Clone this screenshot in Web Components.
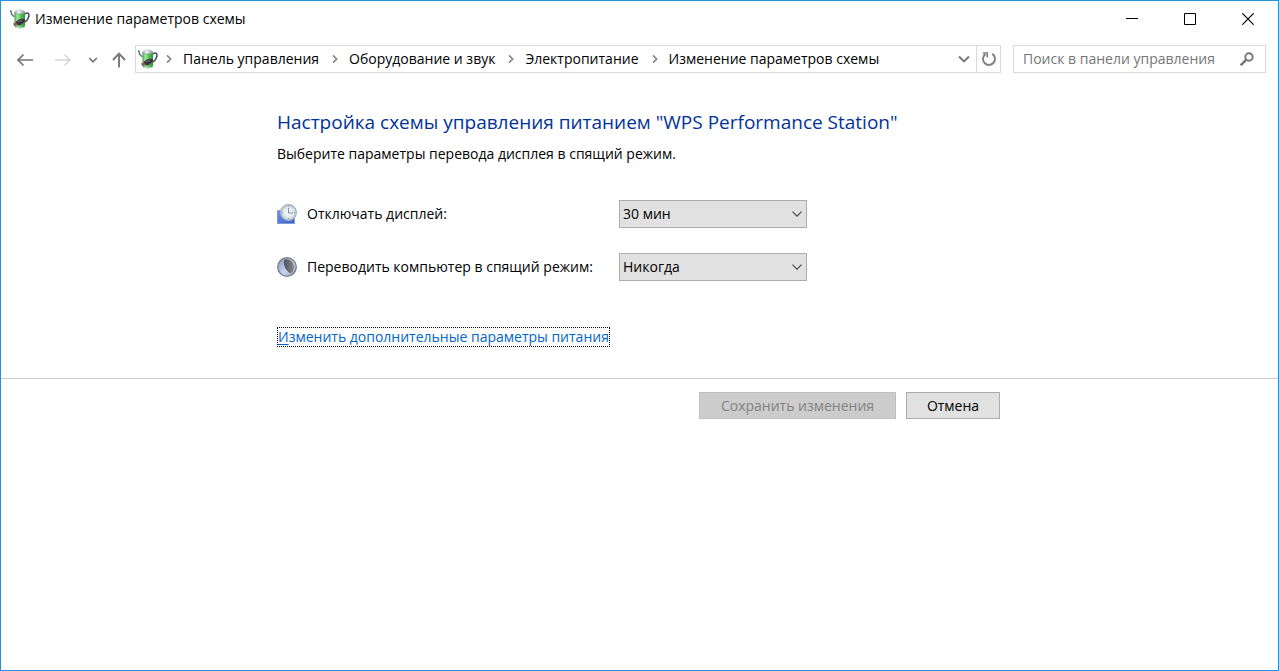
<!DOCTYPE html>
<html lang="ru">
<head>
<meta charset="utf-8">
<meta name="viewport" content="width=device-width, initial-scale=1">
<title>Изменение параметров схемы</title>
<style>
  html, body { height: 100%; margin: 0; }
  body {
    background: #fff;
    color: #000;
    font: 14px/20px "Open Sans", "Noto Sans", sans-serif;
  }
</style>
</head>
<body>
<power-window>
  <title-bar slot="title">Изменение параметров схемы</title-bar>
  <nav-bar slot="nav">
    <crumb-item>Панель управления</crumb-item>
    <crumb-item>Оборудование и звук</crumb-item>
    <crumb-item>Электропитание</crumb-item>
    <crumb-item>Изменение параметров схемы</crumb-item>
  </nav-bar>
  <plan-settings>
    <span slot="heading">Настройка схемы управления питанием "WPS Performance Station"</span>
    <span slot="hint">Выберите параметры перевода дисплея в спящий режим.</span>
    <setting-row label="Отключать дисплей:" icon="display" options="30 мин|1 час|Никогда"></setting-row>
    <setting-row label="Переводить компьютер в спящий режим:" icon="sleep" options="Никогда|30 мин|1 час"></setting-row>
    <advanced-link slot="link"></advanced-link>
  </plan-settings>
  <action-bar></action-bar>
</power-window>

<script>
const define = (name, html, setup) => {
  const template = document.createElement('template');
  template.innerHTML = `<style>*{box-sizing:border-box}</style>` + html;
  customElements.define(name, class extends HTMLElement {
    constructor() {
      super();
      this.attachShadow({ mode: 'open' }).append(template.content.cloneNode(true));
    }
    connectedCallback() {
      if (setup) setup(this, this.shadowRoot);
    }
  });
};

/* Green battery with a power plug, used by the title bar and the address box */
define('battery-icon', `
<style>:host{display:block;width:20px;height:20px;flex:none}svg{display:block}</style>
<svg width="20" height="20" viewBox="0 0 20 20" aria-hidden="true">
  <defs>
    <linearGradient id="g" x1="0" x2="1">
      <stop offset="0" stop-color="#3f9c45"/><stop offset=".25" stop-color="#a2e89a"/>
      <stop offset=".6" stop-color="#52c45a"/><stop offset="1" stop-color="#2f953c"/>
    </linearGradient>
    <linearGradient id="c" x1="0" x2="1">
      <stop offset="0" stop-color="#9aa19f"/><stop offset=".4" stop-color="#f4f6f7"/><stop offset="1" stop-color="#87918f"/>
    </linearGradient>
  </defs>
  <path d="M15 5c2.600-2 4.300-.8 3.900 2-.4 3-1.500 4.500-4.300 6.200" fill="none" stroke="#4b4a63" stroke-width="1.500"/>
  <path d="M.6 1c.3 3 1 5.600 4 6.600" fill="none" stroke="#6d7085" stroke-width="1.500"/>
  <path d="M4.500 3.500v13.500c0 2.300 10.500 2.300 10.500 0v-13.500z" fill="url(#g)"/>
  <path d="M4.500 3.500c0-1.400 1.800-1.700 3-1.900.4-1.300 4-1.300 4.400 0 1.600.2 3.100.5 3.100 1.900 0 1.700-10.500 1.700-10.500 0z" fill="url(#c)" stroke="#8c9995" stroke-width=".4"/>
  <path d="M4.500 16.800c0 2.400 10.500 2.400 10.500 0v1c0 2.200-10.500 2.200-10.500 0z" fill="#b4c4ba"/>
  <path d="M3 14.700l3.500-2.200 2 2.900-3.400 1.800z" fill="#5d4a39"/>
  <path d="M3.300 15.100l2.600-1.500M4.300 16.500l2.700-1.400" stroke="#c79a58" stroke-width=".8"/>
  <path d="M6 12.600l3.500-2.400c1.500-.6 3.500-.4 5.500-.2l-.3 2.700-3.400 3.100-3.400.8z" fill="#3a3540"/>
  <path d="M8.500 12.500l3.300-1.300" stroke="#8a8792" stroke-width=".8"/>
</svg>`);

/* Thin glyphs of the window frame and toolbar */
const glyphs = {
  minimize: ['12', '<path d="M0 5.500h12" stroke="#000" fill="none"/>'],
  maximize: ['12', '<path d="M.5.500h11v11h-11z" stroke="#000" fill="none"/>'],
  close: ['12', '<path d="M.3.300l11.400 11.400M11.700.300l-11.400 11.400" stroke="#000" stroke-width="1.200" fill="none"/>'],
  back: ['16', '<path d="M1 8h15M6.500 2.500l-5.500 5.500 5.500 5.500" stroke="#767676" stroke-width="1.700" fill="none"/>'],
  forward: ['16', '<path d="M0 8h15M9.500 2.500l5.500 5.500-5.500 5.500" stroke="#d5d5d5" stroke-width="1.500" fill="none"/>'],
  recent: ['10', '<path d="M1.200 3l3.800 3.800 3.800-3.800" stroke="#767676" stroke-width="1.700" fill="none"/>'],
  up: ['16', '<path d="M8 1.500v14M2 8l6-6.300 6 6.300" stroke="#767676" stroke-width="1.900" fill="none"/>'],
  next: ['8', '<path d="M2 .4l3.700 3.600-3.700 3.600" stroke="#808080" stroke-width="1.600" fill="none"/>'],
  drop: ['12', '<path d="M1 3.500l5 5 5-5" stroke="#767676" stroke-width="1.900" fill="none"/>'],
  refresh: ['16', '<path d="M11.300 2.900a6 6 0 1 1-6.900.2" stroke="#808080" stroke-width="2" fill="none"/><path d="M1.700 2h4.600v4.600" stroke="#808080" stroke-width="1.600" fill="none"/>'],
  search: ['14', '<circle cx="9" cy="5" r="3.700" stroke="#767676" stroke-width="1.900" fill="none"/><path d="M6.300 7.700l-5.600 5.600" stroke="#767676" stroke-width="2.400" fill="none"/>'],
  select: ['10', '<path d="M.5 2.700l4.500 4.500 4.500-4.500" stroke="#444" stroke-width="1.100" fill="none"/>'],
};
define('line-glyph', `
<style>:host{display:block;flex:none}svg{display:block}</style><span></span>`, (el, root) => {
  const [size, body] = glyphs[el.getAttribute('name')];
  root.querySelector('span').innerHTML =
    `<svg width="${size}" height="${size}" viewBox="0 0 ${size} ${size}" aria-hidden="true">${body}</svg>`;
});

define('power-window', `
<style>
  :host{display:flex;flex-direction:column;box-sizing:border-box;min-height:100%;border:1px solid #2292d9;background:#fff}
</style>
<slot name="title"></slot>
<slot name="nav"></slot>
<main><slot></slot></main>`);

define('title-bar', `
<style>
  :host{display:flex;align-items:center;height:36px;padding:0 1px 0 9px}
  h1{flex:1;margin:0 0 0 5px;font:inherit;line-height:22px}
  button{display:grid;place-items:center;width:58px;height:36px;padding:0;border:0;background:none}
</style>
<battery-icon></battery-icon>
<h1><slot></slot></h1>
<button aria-label="Свернуть"><line-glyph name="minimize"></line-glyph></button>
<button aria-label="Развернуть"><line-glyph name="maximize"></line-glyph></button>
<button aria-label="Закрыть"><line-glyph name="close"></line-glyph></button>`);

define('crumb-item', `
<style>
  :host{display:flex;align-items:center;gap:10px;white-space:nowrap}
  a{color:inherit;text-decoration:none}
</style>
<line-glyph name="next"></line-glyph><a href="#"><slot></slot></a>`);

define('nav-bar', `
<style>
  :host{display:flex;align-items:center;margin:7px 12px 0 5px}
  button{display:grid;place-items:center;padding:0;border:0;background:none;height:28px}
  .history{display:grid;grid-template-columns:38px 38px 22px 30px;margin-right:1px;padding-top:2px}
  .address{flex:1;display:flex;align-items:center;height:28px;padding-left:2px;border:1px solid #d9d9d9;min-width:0}
  nav{flex:1;display:flex;gap:12px;margin-left:7px;min-width:0;overflow:hidden}
  .drop{width:24px}
  .refresh{width:24px;height:26px;border-left:1px solid #d9d9d9}
  .search{display:flex;align-items:center;width:253px;height:28px;margin-left:12px;padding:0 11px 0 9px;border:1px solid #d9d9d9}
  input{flex:1;min-width:0;padding:0;border:0;outline:0;font:inherit;background:none}
  input::placeholder{color:#767676;opacity:1}
</style>
<div class="history">
  <button aria-label="Назад"><line-glyph name="back"></line-glyph></button>
  <button aria-label="Вперед"><line-glyph name="forward"></line-glyph></button>
  <button aria-label="Последние расположения"><line-glyph name="recent"></line-glyph></button>
  <button aria-label="Вверх"><line-glyph name="up"></line-glyph></button>
</div>
<div class="address">
  <battery-icon></battery-icon>
  <nav aria-label="Путь"><slot></slot></nav>
  <button class="drop" aria-label="Предыдущие расположения"><line-glyph name="drop"></line-glyph></button>
  <button class="refresh" aria-label="Обновить"><line-glyph name="refresh"></line-glyph></button>
</div>
<div class="search">
  <input type="text" placeholder="Поиск в панели управления" aria-label="Поиск в панели управления">
  <line-glyph name="search"></line-glyph>
</div>`);

define('plan-settings', `
<style>
  :host{display:block;max-width:725px;margin:0 auto;padding:34px 0 31px}
  h2{margin:0;font-size:19px;line-height:28px;font-weight:400;color:#003399}
  p{margin:8px 0 36px}
  .rows{display:grid;gap:25px;margin-bottom:46px}
</style>
<h2><slot name="heading"></slot></h2>
<p><slot name="hint"></slot></p>
<div class="rows"><slot></slot></div>
<slot name="link"></slot>`);

const settingIcons = {
  display: `
    <defs>
      <linearGradient id="s" x2="1" y2="1"><stop offset="0" stop-color="#6f8fe6"/><stop offset="1" stop-color="#3a62cc"/></linearGradient>
      <radialGradient id="f"><stop offset="0" stop-color="#fff"/><stop offset=".7" stop-color="#d9e6ec"/><stop offset="1" stop-color="#a8bdc9"/></radialGradient>
    </defs>
    <path d="M.5 6.500h17v13h-17z" fill="url(#s)" stroke="#7891cd" stroke-width=".8"/>
    <circle cx="11.500" cy="8.500" r="7.900" fill="url(#f)" stroke="#a9b4b8" stroke-width="1.200"/>
    <path d="M11.500 4v5h4.500" fill="none" stroke="#83919b" stroke-width="1.100"/>
    <path d="M11.500 2v1M11.500 14v1M5 8.500h1M17 8.500h1" stroke="#93a4ae"/>`,
  sleep: `
    <defs>
      <linearGradient id="m" x2="1" y2="1"><stop offset="0" stop-color="#7f90ba"/><stop offset=".55" stop-color="#c8d5f1"/><stop offset="1" stop-color="#8b9ac0"/></linearGradient>
      <linearGradient id="d" x2="1"><stop offset="0" stop-color="#50555c"/><stop offset="1" stop-color="#868784"/></linearGradient>
    </defs>
    <circle cx="10" cy="10" r="9.300" fill="url(#m)" stroke="#7c7c82" stroke-width="1.300"/>
    <path d="M7.200 2.700c4-1.600 9.600 1.200 9.700 7 .1 3.200-1.300 5.600-3.200 6.500-4.400-1.500-8-8-6.500-13.500z" fill="url(#d)"/>`,
};

define('setting-row', `
<style>
  :host{display:grid;grid-template-columns:20px 302px 188px;column-gap:10px;align-items:center}
  svg{display:block}
  label{white-space:nowrap}
  .box{display:grid;align-items:center}
  .box > *{grid-area:1/1}
  select{appearance:none;width:100%;height:28px;margin:0;padding:0 24px 0 3px;border:1px solid #adadad;border-radius:0;background:#e1e1e1;color:#000;font:inherit}
  line-glyph{justify-self:end;margin-right:5px;pointer-events:none}
</style>
<svg width="20" height="20" viewBox="0 0 20 20" aria-hidden="true"></svg>
<label for="value"></label>
<div class="box"><select id="value"></select><line-glyph name="select"></line-glyph></div>`, (el, root) => {
  root.querySelector('svg').innerHTML = settingIcons[el.getAttribute('icon')];
  root.querySelector('label').textContent = el.getAttribute('label');
  root.querySelector('select').replaceChildren(
    ...el.getAttribute('options').split('|').map(text => new Option(text)));
});

define('advanced-link', `
<style>
  :host{display:flex}
  a{color:#0066cc;text-decoration:none;line-height:18px;border:1px dotted #000}
  u{text-underline-offset:2px}
</style>
<a href="#"><u>И</u>зменить дополнительные параметры питания</a>`);

define('action-bar', `
<style>
  :host{display:block;border-top:1px solid #cccccc;padding-top:13px}
  div{display:flex;justify-content:flex-end;gap:10px;max-width:725px;margin:0 auto;padding-right:2px}
  button{height:27px;min-width:94px;padding:0 18px;border:1px solid #adadad;background:#e1e1e1;color:#000;font:inherit}
  button:disabled{min-width:197px;border-color:#bfbfbf;background:#cccccc;color:#838383}
</style>
<div><button disabled>Сохранить изменения</button><button>Отмена</button></div>`);
</script>
</body>
</html>
